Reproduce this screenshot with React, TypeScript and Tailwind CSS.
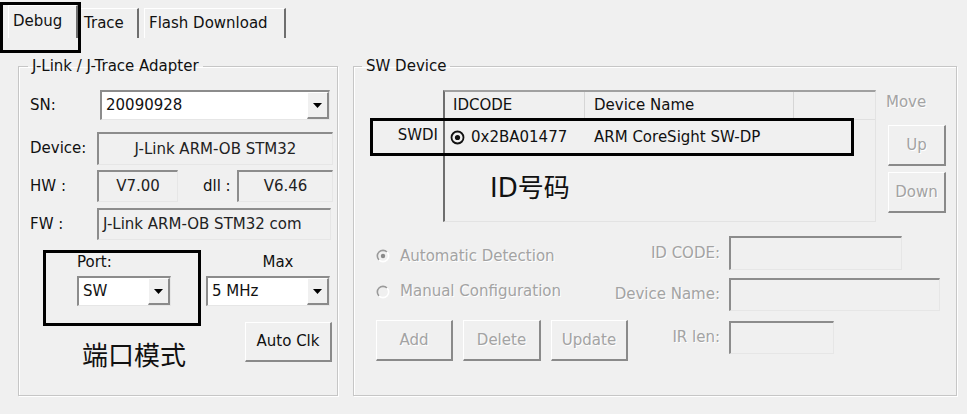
import React from "react";

const font = { fontFamily: '"DejaVu Sans", "Noto Sans CJK SC", sans-serif' };

const sunken =
  "border-t-2 border-l-2 border-b border-r border-t-[#8c8c8c] border-l-[#8c8c8c] border-b-[#e6e6e6] border-r-[#e6e6e6]";
const raised =
  "border-t border-l border-b-2 border-r-2 border-t-white border-l-white border-b-[#8a8a8a] border-r-[#8a8a8a] bg-[#f0f0f0]";
const disabledText = "text-[#a3a3a3] [text-shadow:1px_1px_0_#ffffff]";

const Arrow = () => (
  <svg width="9" height="5" viewBox="0 0 9 5">
    <polygon points="0,0 9,0 4.5,5" fill="#000" />
  </svg>
);

const Combo = ({ value, w }: { value: string; w: string }) => (
  <div className={`flex h-[30px] bg-white ${sunken} ${w}`}>
    <div className="flex-1 flex items-center pl-[4px] text-[15px] text-[#111]">{value}</div>
    <div className={`w-[22px] flex items-center justify-center ${raised}`}>
      <Arrow />
    </div>
  </div>
);

const Field = ({ value, w, h = "h-[32px]", center = true }: { value?: string; w: string; h?: string; center?: boolean }) => (
  <div
    className={`${sunken} ${w} ${h} bg-[#f0f0f0] flex items-center overflow-hidden whitespace-nowrap text-[15px] text-[#222] ${
      center ? "justify-center" : "pl-[4px]"
    }`}
  >
    {value}
  </div>
);

const Btn = ({ label, w, h, disabled }: { label: string; w: string; h: string; disabled?: boolean }) => (
  <div
    className={`${raised} ${w} ${h} shrink-0 flex items-center justify-center text-[15px] ${disabled ? disabledText : "text-[#111]"}`}
  >
    {label}
  </div>
);

const Radio = ({ checked }: { checked?: boolean }) => (
  <svg width="14" height="14" viewBox="0 0 14 14">
    <path d="M11 3 A5.5 5.5 0 1 0 3 11" fill="none" stroke="#9a9a9a" strokeWidth="1.6" />
    <path d="M11 3 A5.5 5.5 0 0 1 3 11" fill="none" stroke="#ffffff" strokeWidth="1.6" />
    {checked && <circle cx="7" cy="7" r="2.2" fill="#8a8a8a" />}
  </svg>
);

const Tab = ({ label, active }: { label: string; active?: boolean }) => (
  <div
    className={`flex items-center border-t border-l border-t-white border-l-white border-r-2 border-r-[#6e6e6e] text-[15px] text-[#111] ${
      active ? "h-[33px] px-[4px] pb-[2px]" : "h-[30px] px-[4px]"
    }`}
  >
    {label}
  </div>
);

export default function App() {
  return (
    <div className="relative w-[967px] h-[414px] bg-[#f0f0f0] overflow-hidden" style={font}>
      {/* tabs */}
      <div className="flex items-end pl-[8px] pt-[5px] gap-[1px]">
        <div className="w-[70px]">
          <Tab label="Debug" active />
        </div>
        <div className="w-[60px]">
          <Tab label="Trace" />
        </div>
        <div className="w-[146px] pl-[4px]">
          <Tab label="Flash Download" />
        </div>
      </div>

      <div className="flex pl-[18px] mt-[19px] gap-[15px]">
        {/* left group */}
        <fieldset className="w-[320px] h-[339px] border border-[#c6c6c6] shadow-[inset_1px_1px_0_#ffffff,1px_1px_0_#ffffff] pl-[11px]">
          <legend className="-ml-[2px] px-[4px] text-[15px] leading-[18px] text-[#111]">J-Link / J-Trace Adapter</legend>

          <div className="flex items-center mt-[15px] h-[30px]">
            <div className="w-[70px] text-[15px] text-[#111]">SN:</div>
            <Combo value="20090928" w="w-[230px]" />
          </div>

          <div className="flex items-center mt-[12px]">
            <div className="w-[67px] text-[15px] text-[#111]">Device:</div>
            <Field value="J-Link ARM-OB STM32" w="w-[236px]" h="h-[33px]" />
          </div>

          <div className="flex items-center mt-[5px]">
            <div className="w-[67px] text-[15px] text-[#111]">HW :</div>
            <Field value="V7.00" w="w-[81px]" />
            <div className="w-[59px] pl-[25px] text-[15px] text-[#111]">dll :</div>
            <Field value="V6.46" w="w-[96px]" />
          </div>

          <div className="flex items-center mt-[6px]">
            <div className="w-[67px] text-[15px] text-[#111]">FW :</div>
            <Field value="J-Link ARM-OB STM32 com" w="w-[234px]" center={false} />
          </div>

          <div className="flex mt-[12px] ml-[47px]">
            <div className="w-[129px] flex flex-col">
              <div className="h-[20px] text-[15px] text-[#111] leading-[20px]">Port:</div>
              <div className="mt-[4px]">
                <Combo value="SW" w="w-[94px]" />
              </div>
              <div className="mt-[34px] ml-[5px] text-[26px] leading-[32px] text-[#111]">端口模式</div>
            </div>
            <div className="w-[124px] flex flex-col">
              <div className="h-[20px] text-[15px] text-[#111] leading-[20px] text-center pl-[20px]">Max</div>
              <div className="mt-[4px]">
                <Combo value="5 MHz" w="w-[124px]" />
              </div>
              <div className="mt-[16px] self-end mr-[-2px]">
                <Btn label="Auto Clk" w="w-[87px]" h="h-[40px]" />
              </div>
            </div>
          </div>
        </fieldset>

        {/* right group */}
        <fieldset className="w-[604px] h-[339px] border border-[#c6c6c6] shadow-[inset_1px_1px_0_#ffffff,1px_1px_0_#ffffff]">
          <legend className="ml-[8px] px-[4px] text-[15px] leading-[18px] text-[#111]">SW Device</legend>

          <div className="flex mt-[15px]">
            <div className="w-[89px] flex flex-col">
              <div className="h-[28px]" />
              <div className="h-[34px] flex items-center justify-end pr-[5px] text-[15px] text-[#111]">SWDI</div>
            </div>
            <div className="w-[433px] h-[132px] border-t-2 border-l-2 border-t-[#a0a0a0] border-l-[#6e6e6e] border-b border-r border-b-[#e3e3e3] border-r-[#e3e3e3] flex flex-col">
              <div className="flex h-[28px] border-b border-[#e0e0e0] text-[15px] text-[#111]">
                <div className="w-[140px] border-r border-[#d6d6d6] pl-[8px] flex items-center">IDCODE</div>
                <div className="w-[209px] border-r border-[#d6d6d6] pl-[9px] flex items-center">Device Name</div>
                <div className="flex-1" />
              </div>
              <div className="flex h-[34px] items-center text-[15px] text-[#111]">
                <div className="w-[140px] flex items-center pl-[5px] gap-[6px]">
                  <svg width="15" height="15" viewBox="0 0 15 15">
                    <circle cx="7.5" cy="7.5" r="6" fill="none" stroke="#111" strokeWidth="1.8" />
                    <circle cx="7.5" cy="7.5" r="2.6" fill="#111" />
                  </svg>
                  <span>0x2BA01477</span>
                </div>
                <div className="pl-[9px]">ARM CoreSight SW-DP</div>
              </div>
              <div className="mt-[18px] ml-[45px] text-[26px] leading-[32px] text-[#111]">ID号码</div>
            </div>
            <div className="ml-[10px] flex flex-col">
              <div className={`h-[22px] mt-[1px] text-[15px] ${disabledText}`}>Move</div>
              <div className="mt-[12px] ml-[2px]">
                <Btn label="Up" w="w-[58px]" h="h-[41px]" disabled />
              </div>
              <div className="mt-[6px] ml-[2px]">
                <Btn label="Down" w="w-[58px]" h="h-[41px]" disabled />
              </div>
            </div>
          </div>

          <div className="flex items-center mt-[14px] h-[34px] pl-[22px]">
            <div className="w-[224px] shrink-0 flex items-center gap-[10px] pt-[6px]">
              <Radio checked />
              <span className={`text-[15px] whitespace-nowrap ${disabledText}`}>Automatic Detection</span>
            </div>
            <div className={`w-[120px] text-right text-[15px] ${disabledText}`}>ID CODE:</div>
            <div className="ml-[9px]">
              <Field w="w-[173px]" h="h-[34px]" />
            </div>
          </div>

          <div className="flex items-center mt-[8px] h-[33px] pl-[22px]">
            <div className="w-[224px] shrink-0 flex items-center gap-[10px] pb-[6px]">
              <Radio />
              <span className={`text-[15px] whitespace-nowrap ${disabledText}`}>Manual Configuration</span>
            </div>
            <div className={`w-[120px] text-right text-[15px] whitespace-nowrap ${disabledText}`}>Device Name:</div>
            <div className="ml-[9px]">
              <Field w="w-[211px]" h="h-[33px]" />
            </div>
          </div>

          <div className="flex items-center mt-[9px] h-[41px] pl-[22px]">
            <div className="w-[224px] shrink-0 flex items-center">
              <Btn label="Add" w="w-[77px]" h="h-[41px]" disabled />
              <div className="ml-[10px] shrink-0">
                <Btn label="Delete" w="w-[78px]" h="h-[41px]" disabled />
              </div>
              <div className="ml-[10px] shrink-0">
                <Btn label="Update" w="w-[77px]" h="h-[41px]" disabled />
              </div>
            </div>
            <div className={`w-[120px] text-right text-[15px] pb-[6px] ${disabledText}`}>IR len:</div>
            <div className="ml-[9px] mb-[7px]">
              <Field w="w-[105px]" h="h-[33px]" />
            </div>
          </div>
        </fieldset>
      </div>

      {/* annotation boxes */}
      <div className="absolute left-[0px] top-[2px] w-[81px] h-[51px] border-[3px] border-black" />
      <div className="absolute left-[43px] top-[250px] w-[158px] h-[76px] border-[3px] border-black" />
      <div className="absolute left-[370px] top-[118px] w-[484px] h-[38px] border-[3px] border-black" />
    </div>
  );
}
